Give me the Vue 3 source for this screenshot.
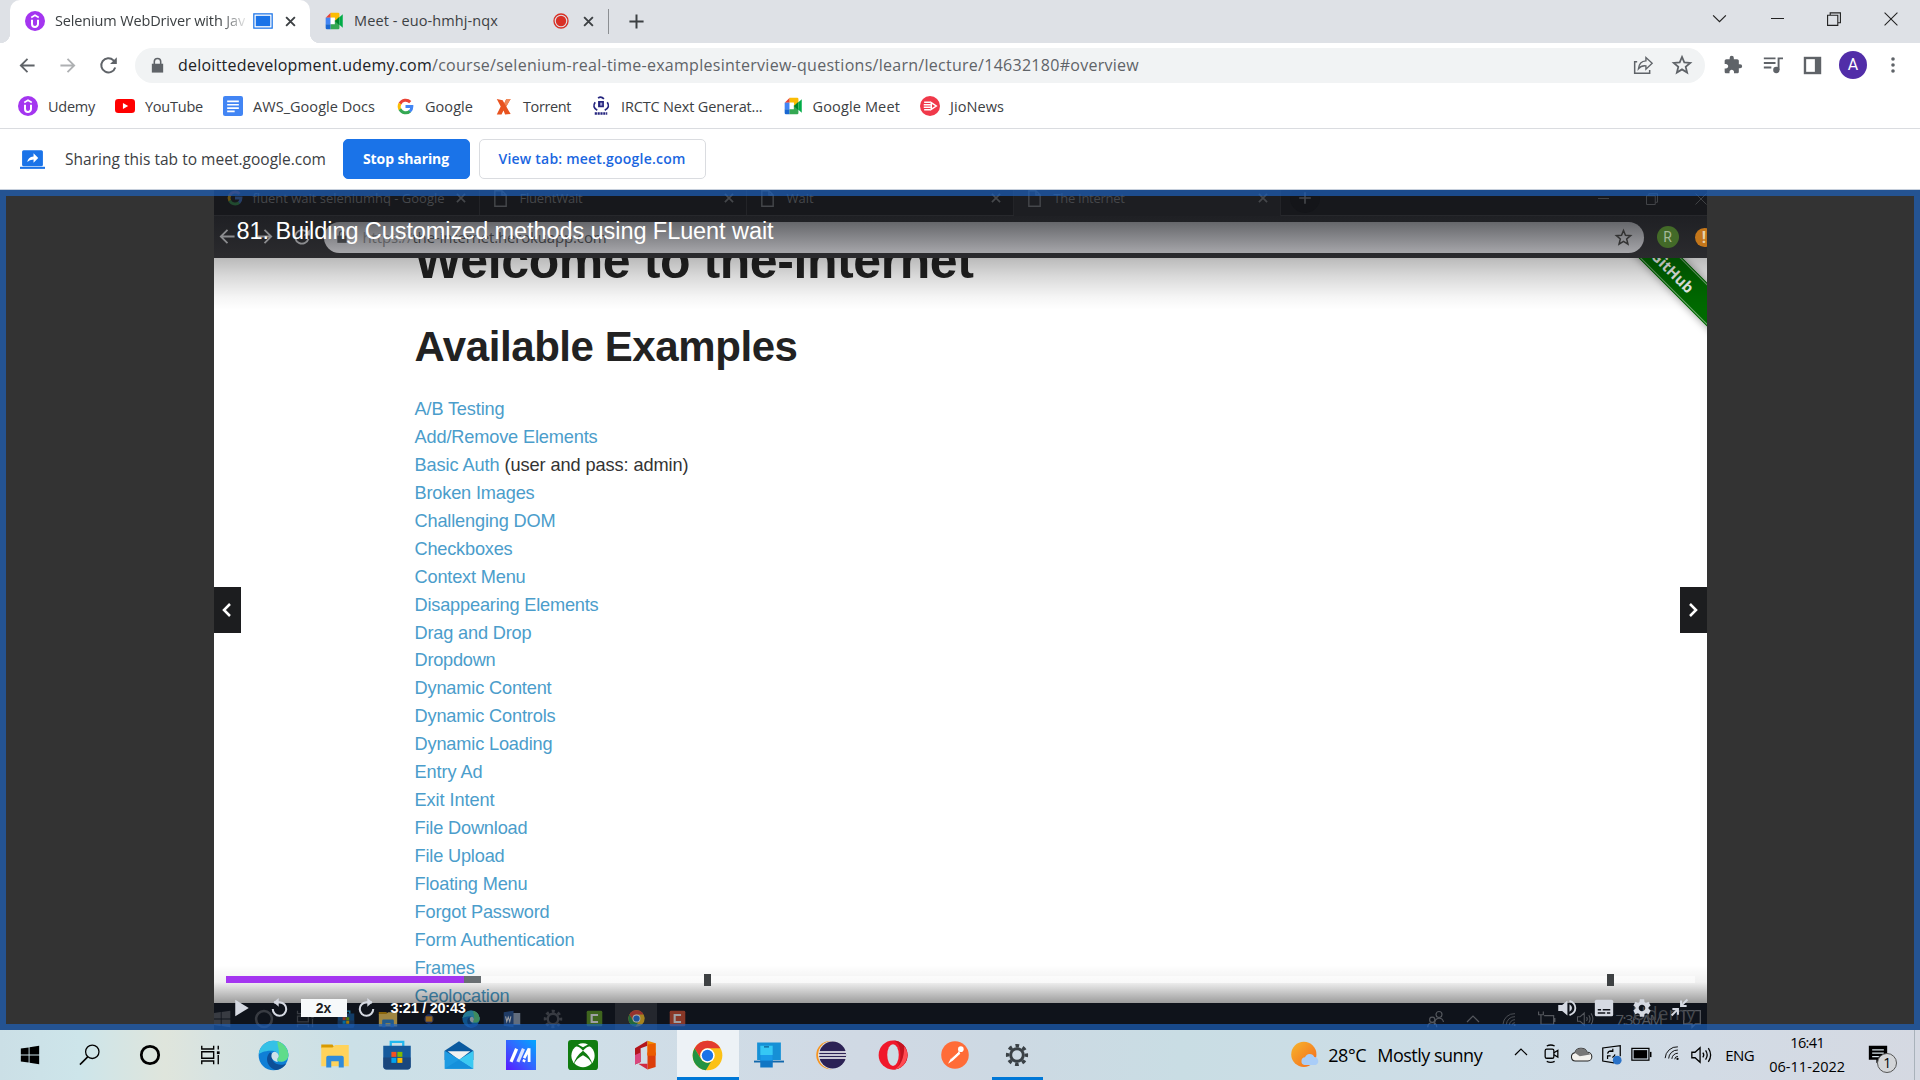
<script setup>
import { h } from 'vue'

// Spreads a label over a fixed advance width by adjusting its tracking.
const vFit = {
  mounted(el, { value }) {
    const w = el.getBoundingClientRect().width
    el.style.letterSpacing = (value - w) / el.textContent.trim().length + 'px'
  },
}

const star = '<path d="M12 3.2l2.500 6 6.500.5-5 4.200 1.600 6.400L12 16.800l-5.600 3.500L8 13.900 3 9.700l6.500-.5z" fill="none" stroke="currentColor" stroke-width="1.900"/>'
const win = '<path fill="currentColor" d="M2 5l8.500-1.300v7.800H2zM11.500 3.500L22 2v9.500H11.500zM2 12.500h8.500v7.800L2 19zM11.500 12.500H22V22l-10.500-1.500z"/>'
const wifi = '<g fill="none" stroke="currentColor" stroke-width="1.300"><path d="M3 20A17 17 0 0 1 21 4"/><path d="M8 20.500A12.500 12.500 0 0 1 21 8.500"/><path d="M12.500 21A8.500 8.500 0 0 1 21 13"/><path d="M16.500 21.500A4.500 4.500 0 0 1 21 17.500"/></g><circle cx="20.500" cy="21" r="1.600" fill="currentColor"/>'
const vol = '<g fill="none" stroke="currentColor" stroke-width="1.400"><path d="M2 9h3.500L11 4v16l-5.500-5H2z"/><path d="M14 9.500q2 2.500 0 5M17 7q3.500 5 0 10M20 4.500q5 7.500 0 15"/></g>'
const taskview = '<g fill="none" stroke="currentColor" stroke-width="1.500"><path d="M3 2v3.500h13V2M3 22v-3.500h13V22M3 8.500h13v7H3zM21 2v4M21 12v10"/></g><path d="M19.500 8h3v3h-3z" fill="currentColor"/>'
const chrome = '<circle cx="12" cy="12" r="11.500" fill="#fbc116"/><path d="M2 6.300A11.500 11.500 0 0 1 22 6.400H12a5.600 5.600 0 0 0-4.900 8.400z" fill="#e33b2e"/><path d="M2 6.300l5 8.500a5.600 5.600 0 0 0 7.700 2.100l-4 6.500A11.500 11.500 0 0 1 2 6.300z" fill="#229342"/><circle cx="12" cy="12" r="5.600" fill="#fff"/><circle cx="12" cy="12" r="4.400" fill="#1a73e8"/>'
const gearPath = 'M19.140 12.940c.04-.3.06-.61.06-.94 0-.32-.02-.64-.07-.94l2.030-1.580c.18-.14.23-.41.12-.61l-1.920-3.320c-.12-.22-.37-.29-.59-.22l-2.390.96c-.5-.38-1.030-.7-1.620-.94l-.36-2.540c-.04-.24-.24-.41-.48-.41h-3.840c-.24 0-.43.17-.47.41l-.36 2.540c-.59.24-1.130.57-1.620.94l-2.390-.96c-.22-.08-.47 0-.59.22L2.740 8.870c-.12.21-.08.47.12.61l2.030 1.580c-.05.3-.09.63-.09.94s.02.64.07.94l-2.030 1.580c-.18.14-.23.41-.12.61l1.920 3.320c.12.22.37.29.59.22l2.390-.96c.5.38 1.030.7 1.620.94l.36 2.540c.05.24.24.41.48.41h3.840c.24 0 .44-.17.47-.41l.36-2.540c.59-.24 1.130-.56 1.620-.94l2.390.96c.22.08.47 0 .59-.22l1.920-3.320c.12-.22.07-.47-.12-.61l-2.010-1.580zM12 15.600c-1.980 0-3.600-1.620-3.600-3.600s1.620-3.600 3.600-3.600 3.600 1.620 3.600 3.600-1.620 3.600-3.600 3.600z'
const cog = '<g fill="none" stroke="currentColor"><circle cx="12" cy="12" r="6.300" stroke-width="2.900"/><circle cx="12" cy="12" r="9.300" stroke-width="3.600" stroke-dasharray="3.650 3.650" stroke-dashoffset="1.800"/></g>'
const folder = '<path d="M1 3.500h9l2 3H1z" fill="#d99a00"/><path d="M1 6h9l2-2h11v17H1z" fill="#ffd35c"/><path d="M5 22v-8q0-1.500 1.500-1.500h11Q19 12.500 19 14v8h-4v-5H9v5z" fill="#2f8bdb"/>'
const edge = '<circle cx="12" cy="12" r="11.500" fill="#0f7fd6"/><path d="M.6 11A11.500 11.500 0 0 1 23.500 11c.3 4-3 6.200-6.500 5.700-2.500-.4-2.600-1.500-1.500-2.800.8-1.500.2-5.300-4.500-5.600C5.500 8 1.500 10 .6 11z" fill="#35c1e6"/><path d="M15 1A11.500 11.500 0 0 1 23.500 11c.3 4-3 6.200-6.500 5.700-2.500-.4-2.600-1.500-1.500-2.800C17.500 9 15 5 15 1z" fill="#5fdc8a"/><path d="M9.500 9.500c-5 4-2 12.500 4.500 13.800 3.500-.4 6.500-2.600 8-5.300-5 3-13 0-10.500-6.500z" fill="#0d4f98"/><path d="M15.300 10.500q-2-2.500-4.300-.5c-2 3.300 1 6.700 4.500 7-.8-1-1-2 0-3.200q1-1.800-.2-3.300z" fill="#d0e2ea"/>'

const icons = {
  udemy: '<circle cx="12" cy="12" r="12" fill="#a435f0"/><path d="M7.500 7.800L12 5.200l4.500 2.600" fill="none" stroke="#fff" stroke-width="2"/><path d="M8.400 10.500v5a3.600 3.600 0 0 0 7.200 0v-5" fill="none" stroke="#fff" stroke-width="2.400"/>',
  meet: '<path d="M2 8l6-6v6z" fill="#ea4335"/><path d="M8 2h9q1.500 0 1.500 1.500V9L13 13V8H8z" fill="#fbbc04"/><path d="M2 8h6v8H2z" fill="#4285f4"/><path d="M2 16h6v6H3.500Q2 22 2 20.500z" fill="#1967d2"/><path d="M8 8h5v8H8z" fill="#fff"/><path d="M8 16h5v-5l5.500 4v5.500Q18.500 22 17 22H8z" fill="#34a853"/><path d="M13 12l5.500-5v10z" fill="#00832d"/><path d="M18.500 7.500L22.500 4v16l-4-3.500z" fill="#00ac47"/>',
  tabshare: '<path d="M1 3.500h22v17H1z" fill="#fff" stroke="#1a73e8" stroke-width="1.500"/><path d="M3.300 5.800h17.400v12.400H3.300z" fill="#1a73e8"/>',
  rec: '<circle cx="12" cy="12" r="10.500" fill="none" stroke="#d93025" stroke-width="2"/><circle cx="12" cy="12" r="7.800" fill="#d93025"/>',
  x: '<path d="M5 5l14 14M19 5L5 19" stroke="currentColor" stroke-width="3" fill="none"/>',
  plus: '<path d="M12 2v20M2 12h20" stroke="currentColor" stroke-width="2.800"/>',
  down: '<path d="M3 7.500l9 9 9-9" fill="none" stroke="currentColor" stroke-width="1.700"/>',
  up: '<path d="M3 16.500l9-9 9 9" fill="none" stroke="currentColor" stroke-width="1.800"/>',
  min: '<path d="M0 12h24" stroke="currentColor" stroke-width="1.900"/>',
  restore: '<path d="M1 5.500h17.500V23H1zM5.500 5V1.500H23v17h-4" fill="none" stroke="currentColor" stroke-width="1.900"/>',
  close: '<path d="M1 1l22 22M23 1L1 23" stroke="currentColor" stroke-width="1.800"/>',
  back: '<path d="M22 12H3M12 2.500L2.500 12l9.500 9.500" fill="none" stroke="currentColor" stroke-width="2.500"/>',
  fwd: '<path d="M2 12h19M12 2.500l9.500 9.500-9.500 9.500" fill="none" stroke="currentColor" stroke-width="2.500"/>',
  reload: '<path d="M20.500 14.500A9 9 0 1 1 18.300 5.500L21 8.200" fill="none" stroke="currentColor" stroke-width="2.500"/><path d="M22.500 1.500V10H14z" fill="currentColor"/>',
  lock: '<path d="M4 9.500h16V22H4z" fill="currentColor"/><path d="M7.500 10V6.500a4.500 4.500 0 0 1 9 0V10" fill="none" stroke="currentColor" stroke-width="2.200"/>',
  share: '<path d="M5 8H2v14h18v-4" fill="none" stroke="currentColor" stroke-width="1.800"/><path d="M6.500 16.500q1-9 9-9.500V3l7.500 7-7.500 7v-4q-6-.5-9 3.500z" fill="none" stroke="currentColor" stroke-width="1.600"/>',
  star,
  puzzle: '<path fill="currentColor" d="M20.500 11H19V7c0-1.100-.9-2-2-2h-4V3.500a2.500 2.500 0 0 0-5 0V5H4c-1.100 0-2 .9-2 2v3.800h1.500c1.500 0 2.700 1.200 2.700 2.700S5 16.200 3.500 16.200H2V20c0 1.100.9 2 2 2h3.800v-1.500c0-1.500 1.200-2.700 2.700-2.700s2.700 1.200 2.700 2.700V22H17c1.100 0 2-.9 2-2v-4h1.500a2.500 2.500 0 0 0 0-5z"/>',
  music: '<path d="M1 4h14M1 9.500h14M1 15h9" stroke="currentColor" stroke-width="2.300"/><circle cx="16" cy="18" r="3.800" fill="currentColor"/><path d="M18.700 18V4H24" fill="none" stroke="currentColor" stroke-width="2.300"/>',
  panel: '<path d="M1 1h22v22H1z" fill="currentColor"/><path d="M4 4h11v16H4z" fill="#fff"/>',
  dots: '<g fill="currentColor"><circle cx="12" cy="4" r="2.400"/><circle cx="12" cy="12" r="2.400"/><circle cx="12" cy="20" r="2.400"/></g>',
  youtube: '<rect y="3.500" width="24" height="17" rx="4" fill="#f00"/><path d="M9.500 8.500v7l6.300-3.500z" fill="#fff"/>',
  docs: '<rect width="24" height="24" rx="2.500" fill="#4285f4"/><path d="M5 6.500h14M5 10.500h14M5 14.500h14M5 18.500h9" stroke="#fff" stroke-width="2"/>',
  google: '<g fill="none" stroke-width="3.800"><path d="M18 6.500A8 8 0 0 0 5 8.500" stroke="#ea4335"/><path d="M5 8.300a8 8 0 0 0 0 7.500" stroke="#fbbc04"/><path d="M5 15.500a8 8 0 0 0 12.700 2.300" stroke="#34a853"/><path d="M12 12h8q0 4-2.600 6.200" stroke="#4285f4"/></g>',
  torrent: '<path d="M3.500 2.500l7.500 1.500 2 4 2.500-5.500h5.500L15.500 12 21 21.500l-7 .5-2-5-2.500 5H3.500l5-10z" fill="#e8531f"/><path d="M15.500 2.500H21L15.500 12 13 8z" fill="#f08a5a"/>',
  irctc: '<g fill="none" stroke="#24247e" stroke-width="2"><path d="M8.500 2.500q3.500-3 7 1M5 7.500q-4 6 2.500 9.500M19.500 7.500q4 6-3 9.500"/></g><path d="M8.500 6h7v7.500h-7z" fill="#24247e"/><path d="M11 8h2.500v3.500H11z" fill="#aaa8d8"/><path d="M4.500 21h15" stroke="#24247e" stroke-width="3.200" stroke-dasharray="2.600 .8"/>',
  jio: '<circle cx="12" cy="12" r="12" fill="#f0394a"/><path d="M5 7.500h8M4.500 10.500H13M4.500 13.500H13M5 16.500h8" stroke="#fff" stroke-width="1.700"/><path d="M13.500 8l6 4-6 4z" fill="none" stroke="#fff" stroke-width="1.800"/>',
  present: '<rect x="2" y="3" width="20" height="15.500" rx="1.500" fill="#1a73e8"/><path d="M0 19h24v2H0z" fill="#1a73e8"/><path d="M7 14.500q.5-5 6-5.500V6l4.500 4.500L13 15v-3q-4 0-6 2.500z" fill="#fff"/>',
  page: '<path d="M4 1h10l6 6v16H4zM14 1v6h6" fill="none" stroke="currentColor" stroke-width="2"/>',
  chevL: '<path d="M16 4l-8 8 8 8" fill="none" stroke="#fff" stroke-width="3.400"/>',
  chevR: '<path d="M8 4l8 8-8 8" fill="none" stroke="#fff" stroke-width="3.400"/>',
  play: '<path d="M3 1l18 11L3 23z" fill="currentColor"/>',
  rew: '<path d="M5 5.500h7.500A8.500 8.500 0 1 1 3.500 14" fill="none" stroke="currentColor" stroke-width="2.600"/><path d="M11 0v11L4.500 5.500z" fill="currentColor"/>',
  ffw: '<path d="M19 5.500h-7.500A8.500 8.500 0 1 0 20.500 14" fill="none" stroke="currentColor" stroke-width="2.600"/><path d="M13 0v11l6.500-5.500z" fill="currentColor"/>',
  sound: '<path fill="currentColor" d="M1.500 8.500v7h4.700L12.500 21V3L6.200 8.500zM15 7.500v9q3-1.800 3-4.500t-3-4.500z"/><path d="M15 3.500q7 2.500 7 8.500t-7 8.500" fill="none" stroke="currentColor" stroke-width="2.200"/>',
  cc: '<rect x="1" y="2" width="22" height="20" rx="2" fill="currentColor"/><path d="M4.500 14h4M10.500 14h9M4.500 18h9M15.500 18h4" stroke="#10131a" stroke-width="1.900"/>',
  gear: `<path fill="currentColor" d="${gearPath}"/>`,
  shrink: '<path d="M22 2l-7 7M14 3v7h7M2 22l7-7M3 14h7v7" fill="none" stroke="currentColor" stroke-width="2.600"/>',
  win, wifi, vol, taskview, chrome, cog, folder, edge,
  search: '<circle cx="14.500" cy="8.500" r="7.300" fill="none" stroke="#000" stroke-width="1.400"/><path d="M9.500 14L1 22.500" stroke="#000" stroke-width="1.700"/>',
  ring: '<circle cx="12" cy="12" r="9.500" fill="none" stroke="currentColor" stroke-width="3"/>',
  store: '<path d="M7 5V1.500h10V5" fill="none" stroke="#21b8ef" stroke-width="1.800"/><path d="M1 4.500h22V21q0 2.500-2.500 2.500h-17Q1 23.500 1 21z" fill="#155a9c"/><path d="M1 14h22v7q0 2.500-2.500 2.500h-17Q1 23.500 1 21z" fill="#1d3f70" opacity=".7"/><path d="M7.500 9.500h4v4h-4z" fill="#f25022"/><path d="M12.300 9.500h4v4h-4z" fill="#7fba00"/><path d="M7.500 14.300h4v4h-4z" fill="#00a4ef"/><path d="M12.300 14.300h4v4h-4z" fill="#ffb900"/>',
  mail: '<path d="M.5 8.500L12 1l11.500 7.500V16H.5z" fill="#0b5a9f"/><path d="M3 9h18l-9 7z" fill="#f2f2f2"/><path d="M.5 8.500L14 16.500 23.500 23H.5z" fill="#1e9be2"/><path d="M23.500 8.500V23L12 15.800z" fill="#3cc9f2"/><path d="M.5 23l11.500-7.200L23.500 23z" fill="#1590db"/>',
  asus: '<defs><linearGradient id="ga" x1="0" y1="1" x2="1" y2="0"><stop offset="0" stop-color="#5a18ff"/><stop offset=".5" stop-color="#3366ff"/><stop offset="1" stop-color="#00a8ff"/></linearGradient></defs><path d="M0 0h24v24H0z" fill="url(#ga)"/><path d="M4 17.500L8.500 7" stroke="#fff" stroke-width="2.600"/><path d="M9.500 17.500L14 7" stroke="#d9e2ff" stroke-width="2.600"/><path d="M14 17.500l.8-1.800M18.500 6.500v11M14.500 14.500L18.500 6.800" fill="none" stroke="#fff" stroke-width="2.200"/>',
  xbox: '<rect width="24" height="24" rx="2.500" fill="#107c10"/><circle cx="12" cy="12.500" r="9.300" fill="#fff"/><path d="M5.500 5Q9 5 12 8.500 15 5 18.500 5L16 2H8z" fill="#107c10"/><path d="M8 3.500Q12 1.500 16 3.500L12 5.800z" fill="#fff"/><path d="M4.500 19.500Q6 13 12 8.500q6 4.500 7.500 11Q17 14.500 12 12.200 7 14.500 4.500 19.500z" fill="#107c10"/>',
  office: '<path d="M4 6.500L14 .5v4L8.500 6.500v11L4 19.500z" fill="#b3151b"/><path d="M14 .5l6.500 2V12H14z" fill="#f08a00"/><path d="M14 10h6.500v11.500L14 23.500z" fill="#dc3e0a"/><path d="M14 3.500l6.500-1v10H14z" fill="#eb5c00"/><path d="M4 12v7.500l4.500-2V10z" fill="#d9477e"/><path d="M6.500 19H14v4.500z" fill="#d12b42"/>',
  phone: '<path d="M2.500 2h19v14h-19z" fill="#1690d6"/><path d="M0 16.500h24v1.500H0z" fill="#1268ac"/><path d="M5 4.500h10v17.500H5z" fill="#1076c4"/><path d="M5 4.500h10V12H5z" fill="#35c8f5"/><path d="M5 12h10v4.500H5z" fill="#1a9be8"/><path d="M8 5.500h4" stroke="#0b5d94"/>',
  eclipse: '<circle cx="11.500" cy="12" r="11.300" fill="#f7941e"/><circle cx="13" cy="12" r="11.300" fill="#dce3ea"/><circle cx="13.300" cy="12" r="10.800" fill="#2c2255"/><path d="M2.500 9.600h21.500M2 12h22M2.500 14.400h21.500" stroke="#fff" stroke-width="1.200"/>',
  opera: '<ellipse cx="12" cy="12" rx="11.500" ry="11.700" fill="#f0182b"/><path d="M12 .3a11.600 11.600 0 0 1 0 23.400q6-1 6-11.700T12 .3z" fill="#c4121f"/><path d="M13 23.600A11.600 11.600 0 0 0 21 5q0 14-8 18.600z" fill="#ff4b52"/><ellipse cx="12" cy="12" rx="4.600" ry="8.700" fill="#cddde5"/>',
  postman: '<circle cx="12" cy="12" r="11.800" fill="#ff6c37"/><circle cx="17" cy="7" r="2.400" fill="#fff"/><path d="M15.500 8.500l-7 6.500-2.500 4.500 4-2.500 6.500-6z" fill="#fff"/><path d="M8.500 15l6-5.500" stroke="#ff6c37" stroke-width=".8"/>',
  weather: '<defs><linearGradient id="gw" x1="0" y1="0" x2="1" y2="1"><stop offset="0" stop-color="#f7b52c"/><stop offset="1" stop-color="#f4691e"/></linearGradient></defs><circle cx="11" cy="11.500" r="10.800" fill="url(#gw)"/><path d="M11.500 20.500a3.300 3.300 0 0 1 .5-6.500 4.300 4.300 0 0 1 8-.3 3.500 3.500 0 0 1 1 6.800z" fill="#a9cdf8"/>',
  meetnow: '<g fill="none" stroke="#000" stroke-width="1.600"><rect x="4" y="6.500" width="11" height="11.500" rx="2"/><path d="M15 11l5-3v8.500l-5-3M6 2.500q5-2.500 10 0M6 22q5 2.500 10 0"/></g>',
  cloud: '<path d="M5 19.500a4.800 4.800 0 0 1-.6-9.500 7.500 7.500 0 0 1 14-.5 5 5 0 0 1 .8 10z" fill="#f4f2ee" stroke="#222" stroke-width="1.200"/><path d="M4.400 10a7.500 7.500 0 0 1 14-.5 5 5 0 0 1 3.500 2.500L10 14z" fill="#777"/>',
  sync: '<g fill="none" stroke="#000" stroke-width="1.400"><path d="M15 21.500L2 19.500v-15L22 2v12"/><path d="M7.500 11q1-4 6-3M13.500 5.500V8.500H10.500M7.500 17v-3.500H11M16 12q-.5 2-3 3.500"/></g><circle cx="18.500" cy="18.500" r="5" fill="#2a72c8"/>',
  battery: '<rect x="1" y="5" width="19.500" height="13.500" fill="none" stroke="#000" stroke-width="1.400"/><path d="M3 7h15.500v9.500H3z" fill="#000"/><path d="M22.500 9v6" stroke="#000" stroke-width="1.800"/>',
  notif: '<path d="M1 2h22v17h-9l-4 4v-4H1z" fill="#000"/><path d="M5 7h14M5 11h14M5 15h8" stroke="#d6e2e8" stroke-width="1.500"/>',
  bubble: '<path d="M2 2h20v16h-6l-4 4v-4H2z" fill="none" stroke="currentColor" stroke-width="1.600"/>',
  people: '<g fill="none" stroke="currentColor" stroke-width="1.600"><circle cx="16" cy="6" r="4"/><path d="M10 20q0-9 6-9 5 0 6 5"/><circle cx="7" cy="13" r="3.500"/><path d="M1 23q0-6 6-6t6 6"/></g>',
  plug: '<g fill="none" stroke="currentColor" stroke-width="1.500"><path d="M9 7h12v11H5v-6M22.500 10v5M2 2v4h6V2M5 6v6"/></g>',
  word: '<path d="M12 4h11v16H12z" fill="#9aa9bf"/><path d="M1 3l13-2v22L1 21z" fill="#2b5797"/><path d="M3.500 8.500l1.500 7 2-6 2 6 1.500-7" fill="none" stroke="#fff" stroke-width="1.400"/>',
  camG: '<rect x="1" y="1" width="22" height="22" rx="2" fill="#5f9c20"/><path d="M17 7H8v10h9" fill="none" stroke="#fff" stroke-width="3"/>',
  camR: '<rect x="1" y="1" width="22" height="22" rx="2" fill="#d9502f"/><path d="M17 7H8v10h9" fill="none" stroke="#fff" stroke-width="3"/>',
  bulb: '<circle cx="12" cy="12" r="7" fill="#2b3f8c"/><path d="M7 8h10v8H7z" fill="#f0a020"/>',
}

const Icon = (p) =>
  h('svg', { viewBox: '0 0 24 24', width: p.s, height: p.s, class: 'icon', innerHTML: icons[p.n] })
Icon.props = ['n', 's']

const bookmarks = [
  ['udemy', 20, 'Udemy', 47],
  ['youtube', 20, 'YouTube', 58],
  ['docs', 20, 'AWS_Google Docs', 122],
  ['google', 19, 'Google', 48],
  ['torrent', 19, 'Torrent', 48],
  ['irctc', 20, 'IRCTC Next Generat...', 141.500],
  ['meet', 20, 'Google Meet', 87.500],
  ['jio', 20, 'JioNews', 54],
]

const examples = [
  ['A/B Testing', 90], ['Add/Remove Elements', 183], ['Basic Auth', 85], ['Broken Images', 120],
  ['Challenging DOM', 141], ['Checkboxes', 98], ['Context Menu', 111], ['Disappearing Elements', 184],
  ['Drag and Drop', 117], ['Dropdown', 81], ['Dynamic Content', 137], ['Dynamic Controls', 141],
  ['Dynamic Loading', 138], ['Entry Ad', 68], ['Exit Intent', 80], ['File Download', 113],
  ['File Upload', 90], ['Floating Menu', 113], ['Forgot Password', 135], ['Form Authentication', 160],
  ['Frames', 60], ['Geolocation', 95],
]

const innerTasks = [
  ['win', 20], ['ring', 20], ['taskview', 20], ['store', 18], ['folder', 20], ['bulb', 16],
  ['edge', 18], ['word', 18], ['cog', 20], ['camG', 17], ['chrome', 17], ['camR', 17],
]

const systemTasks = [['win', 22], ['search', 22], ['ring', 22], ['taskview', 22]]
const tasks = [
  ['edge', 31], ['folder', 30], ['store', 30], ['mail', 30], ['asus', 30], ['xbox', 30], ['office', 30],
  ['chrome', 31], ['phone', 30], ['eclipse', 30], ['opera', 30], ['postman', 28], ['cog', 24],
]
const tray = [['up', 16], ['meetnow', 19], ['cloud', 21], ['sync', 21], ['battery', 21], ['wifi', 17], ['vol', 22]]
</script>

<template>
  <div class="desktop">
    <header class="strip">
      <div class="tab active">
        <Icon n="udemy" :s="20" />
        <div class="title fade"><span v-fit="190" class="t">Selenium WebDriver with Jav</span></div>
        <Icon n="tabshare" :s="20" />
        <Icon n="x" :s="15" class="shut" />
      </div>
      <div class="tab">
        <Icon n="meet" :s="20" />
        <div class="title"><span v-fit="144" class="t">Meet - euo-hmhj-nqx</span></div>
        <Icon n="rec" :s="16" class="record" />
        <Icon n="x" :s="15" class="shut" />
      </div>
      <i class="split"></i>
      <Icon n="plus" :s="17" class="newtab" />
      <div class="winctl">
        <Icon n="down" :s="17" /><Icon n="min" :s="13" /><Icon n="restore" :s="14" /><Icon n="close" :s="14" />
      </div>
    </header>

    <div class="toolbar">
      <div class="nav">
        <Icon n="back" :s="17" /><Icon n="fwd" :s="17" class="off" /><Icon n="reload" :s="19" />
      </div>
      <div class="omni">
        <Icon n="lock" :s="17" />
        <span v-fit="254" class="t host">deloittedevelopment.udemy.com</span>
        <span v-fit="707" class="t path">/course/selenium-real-time-examplesinterview-questions/learn/lecture/14632180#overview</span>
        <Icon n="share" :s="20" class="send" />
        <Icon n="star" :s="22" />
      </div>
      <div class="actions">
        <Icon n="puzzle" :s="20" /><Icon n="music" :s="20" /><Icon n="panel" :s="19" />
        <b class="avatar">A</b>
        <Icon n="dots" :s="18" class="more" />
      </div>
    </div>

    <nav class="bookmarks">
      <div v-for="b in bookmarks" :key="b[2]" class="bm">
        <span class="fav"><Icon :n="b[0]" :s="b[1]" /></span>
        <span v-fit="b[3]" class="t">{{ b[2] }}</span>
      </div>
    </nav>

    <div class="infobar">
      <Icon n="present" :s="25" />
      <span v-fit="261" class="t msg">Sharing this tab to meet.google.com</span>
      <button class="btn primary"><span v-fit="86" class="t">Stop sharing</span></button>
      <button class="btn"><span v-fit="187" class="t">View tab: meet.google.com</span></button>
    </div>

    <main class="stage">
      <section class="video">
        <div class="rtabs">
          <div class="rtab first"><Icon n="google" :s="18" /><span v-fit="192" class="t">fluent wait seleniumhq - Google</span><Icon n="x" :s="14" class="rx" /></div>
          <div class="rtab"><Icon n="page" :s="17" /><span v-fit="63" class="t">FluentWait</span><Icon n="x" :s="14" class="rx" /></div>
          <div class="rtab"><Icon n="page" :s="17" /><span v-fit="27" class="t">Wait</span><Icon n="x" :s="14" class="rx" /></div>
          <div class="rtab cur"><Icon n="page" :s="17" /><span v-fit="71" class="t">The Internet</span><Icon n="x" :s="14" class="rx" /></div>
          <span class="radd"><Icon n="plus" :s="14" /></span>
          <div class="rctl"><Icon n="min" :s="11" /><Icon n="restore" :s="12" /><Icon n="close" :s="12" /></div>
        </div>
        <div class="rbar">
          <div class="rnav"><Icon n="back" :s="17" /><Icon n="fwd" :s="17" /><Icon n="reload" :s="18" /></div>
          <div class="romni">
            <Icon n="lock" :s="14" />
            <span class="t rurl" v-fit="244"><i>https://</i>the-internet.herokuapp.com</span>
            <Icon n="star" :s="19" class="rstar" />
          </div>
          <b class="rav">R</b><b class="rwarn">!</b>
        </div>
        <div class="page">
          <h1><span v-fit="559" class="t">Welcome to the-internet</span></h1>
          <h2><span v-fit="383" class="t">Available Examples</span></h2>
          <ul>
            <li v-for="e in examples" :key="e[0]">
              <a v-fit="e[1]" class="t">{{ e[0] }}</a>
              <span v-if="e[0] === 'Basic Auth'" v-fit="184" class="t note">(user and pass: admin)</span>
            </li>
          </ul>
          <div class="ribbon"><span>GitHub</span></div>
          <div class="shade top"></div>
          <div class="shade bottom"></div>
        </div>
        <div class="rtask">
          <span v-for="(t, i) in innerTasks" :key="i" class="rt" :class="{ lit: t[0] === 'chrome' }"><Icon :n="t[0]" :s="t[1]" /></span>
          <div class="rtray">
            <Icon n="people" :s="18" /><Icon n="up" :s="16" /><Icon n="wifi" :s="16" /><Icon n="plug" :s="19" /><Icon n="vol" :s="18" />
            <span v-fit="46" class="t">7:36 AM</span><Icon n="bubble" :s="20" />
          </div>
          <span class="mark">Udemy</span>
        </div>

        <div class="heading"><span v-fit="537" class="t">81. Building Customized methods using FLuent wait</span></div>
        <div class="side prev"><Icon n="chevL" :s="18" /></div>
        <div class="side next"><Icon n="chevR" :s="18" /></div>

        <div class="player">
          <div class="track">
            <i class="played"></i><i class="buffered"></i>
            <i class="cue" style="left: 478px"></i><i class="cue" style="left: 1381px"></i>
          </div>
          <div class="controls">
            <Icon n="play" :s="18" /><Icon n="rew" :s="19" />
            <span class="rate">2x</span><Icon n="ffw" :s="19" />
            <span v-fit="75" class="t time">3:21 / 20:43</span>
            <div class="opts">
              <Icon n="sound" :s="20" /><Icon n="cc" :s="20" /><Icon n="gear" :s="22" /><Icon n="shrink" :s="19" />
            </div>
          </div>
        </div>
      </section>
      <div class="frame"></div>
    </main>

    <footer class="taskbar">
      <span v-for="(t, i) in systemTasks" :key="i" class="sys"><Icon :n="t[0]" :s="t[1]" /></span>
      <div class="pins">
        <span v-for="t in tasks" :key="t[0]" class="pin" :class="{ open: t[0] === 'chrome', run: t[0] === 'cog' }"><Icon :n="t[0]" :s="t[1]" /></span>
      </div>
      <div class="weather">
        <Icon n="weather" :s="28" />
        <span v-fit="38" class="t">28°C</span><span v-fit="105" class="t sunny">Mostly sunny</span>
      </div>
      <div class="tray">
        <span v-for="t in tray" :key="t[0]" class="tr"><Icon :n="t[0]" :s="t[1]" /></span>
      </div>
      <span v-fit="29" class="t lang">ENG</span>
      <div class="clock"><span v-fit="34" class="t">16:41</span><span v-fit="76" class="t">06-11-2022</span></div>
      <div class="notice"><Icon n="notif" :s="20" /><b>1</b></div>
      <i class="peek"></i>
    </footer>
  </div>
</template>

<style>
body { margin: 0; overflow: hidden; }
</style>

<style scoped>
.desktop { width: 1920px; height: 1080px; display: flex; flex-direction: column; overflow: hidden; background: #fff; color: #3c4043; font: 15px "Open Sans", "Noto Sans", sans-serif; }
.t { flex: none; display: inline-block; width: max-content; white-space: nowrap; }
.icon { flex: none; display: block; overflow: visible; }
i { font-style: normal; }

.strip { height: 43px; flex: none; display: flex; align-items: center; background: #dee1e6; padding-left: 10px; box-sizing: border-box; }
.tab { display: flex; align-items: center; box-sizing: border-box; height: 43px; width: 298px; padding: 0 12px 1px 14px; font-size: 14.5px; }
.tab.active { position: relative; width: 300px; padding-left: 15px; background: #fff; border-radius: 10px 10px 0 0; }
.tab.active::before, .tab.active::after { content: ""; position: absolute; bottom: 0; width: 10px; height: 10px; }
.tab.active::before { left: -10px; background: radial-gradient(circle at 0 0, transparent 10px, #fff 10.500px); }
.tab.active::after { right: -10px; background: radial-gradient(circle at 100% 0, transparent 10px, #fff 10.500px); }
.title { margin: 0 0 2px 10px; flex: none; width: 198px; overflow: hidden; }
.active .title { width: 190px; margin-right: 8px; }
.fade { -webkit-mask-image: linear-gradient(90deg, #000 165px, transparent 194px); mask-image: linear-gradient(90deg, #000 165px, transparent 194px); }
.shut { margin-left: auto; color: #3c4043; }
.record { margin-left: 1px; }
.split { width: 1px; height: 25px; background: #8b8e92; }
.newtab { margin: 0 0 1px 19px; color: #3c4043; }
.winctl { display: flex; align-items: center; margin: 0 22px 6px auto; color: #222; gap: 43px; }

.toolbar { height: 45px; flex: none; display: flex; align-items: center; color: #5f6368; padding-bottom: 1px; box-sizing: border-box; }
.nav { width: 135px; flex: none; display: flex; gap: 23px; padding-left: 19px; box-sizing: border-box; align-items: center; }
.off { opacity: .5; }
.omni { width: 1570px; height: 35px; border-radius: 18px; flex: none; box-sizing: border-box; background: #f1f3f4; display: flex; align-items: center; padding: 0 12px 0 14px; font-size: 16px; }
.host { margin-left: 12px; color: #202124; }
.path { color: #5f6368; }
.send { margin: 0 18px 0 auto; }
.actions { flex: 1; display: flex; align-items: center; padding-left: 18px; gap: 20px; }
.avatar { width: 28px; height: 28px; margin: 0 6px 0 -3px; border-radius: 50%; background: #512da8; color: #fff; font: 16px/28px Roboto, sans-serif; text-align: center; flex: none; }
.more { margin-left: -9px; }

.bookmarks { height: 40px; box-sizing: border-box; flex: none; display: flex; align-items: center; gap: 20px; padding: 0 0 5px 18px; border-bottom: 1px solid #dadce0; font-size: 14.5px; margin-top: 1px; }
.bm { display: flex; align-items: center; gap: 10px; }
.fav { width: 20px; display: flex; justify-content: center; }

.infobar { height: 61px; flex: none; box-sizing: border-box; display: flex; align-items: center; padding: 0 0 0 20px; border-bottom: 1px solid #c6cfdc; }
.msg { margin: 0 17px 0 20px; font-size: 15.5px; }
.btn { box-sizing: border-box; height: 40px; border: 1px solid #dadce0; border-radius: 5px; padding: 0 20px 2px 19px; background: #fff; color: #1a66e0; font: 600 14px "Open Sans", sans-serif; margin-right: 9px; width: 227px; display: flex; align-items: center; justify-content: center; }
.btn.primary { width: 127px; background: #1a73e8; border-color: #1a73e8; color: #fff; font-weight: 700; }

.stage { position: relative; height: 840px; flex: none; display: flex; justify-content: center; background: #333; }
.frame { position: absolute; inset: 0; border: 6px solid rgba(29, 99, 192, .68); }
.video { position: relative; width: 1493px; height: 840px; overflow: hidden; display: flex; flex-direction: column; background: #fff; }
.rtabs { height: 26px; flex: none; display: flex; background: #17181c; color: #45474b; font: 13px "Open Sans", sans-serif; border-bottom: 1px solid #27282c; box-sizing: border-box; }
.rtab { box-sizing: border-box; width: 267px; height: 25px; display: flex; align-items: center; padding: 0 10px 9px 12px; gap: 11px; border-right: 1px solid #232428; }
.rtab.first { width: 266px; gap: 9px; padding-right: 12px; }
.rtab.first .icon:first-child { opacity: .35; }
.rtab.cur { background: #1d1e22; height: 26px; padding-bottom: 10px; }
.rx { margin-left: auto; }
.radd { width: 30px; height: 30px; flex: none; border-radius: 50%; margin: -7px 0 0 9px; display: flex; align-items: center; justify-content: center; background: #141519; }
.rctl { margin: 3px 0 0 auto; display: flex; gap: 37px; }
.rbar { position: relative; height: 42px; flex: none; display: flex; align-items: center; background: linear-gradient(#1f2024, #2b2b2e); }
.rnav { width: 110px; display: flex; gap: 20px; padding-left: 5px; box-sizing: border-box; color: #8b8c8f; flex: none; }
.romni { width: 1320px; height: 31px; border-radius: 16px; flex: none; display: flex; align-items: center; box-sizing: border-box; padding: 0 11px 0 11px; background: linear-gradient(#66676b, #a6a6aa); color: #3f4043; font: 15px "Open Sans", sans-serif; }
.rurl { margin-left: 14px; color: #3a3b3e; }
.rurl i { color: #5d5e61; }
.rstar { margin-left: auto; color: #333; }
.rav, .rwarn { flex: none; border-radius: 50%; text-align: center; font-family: Roboto, sans-serif; font-weight: 400; }
.rav { width: 22px; height: 22px; margin-left: 13px; line-height: 22px; font-size: 14px; background: #436a28; color: #a5b898; }
.rwarn { width: 19px; height: 19px; margin-left: 16px; line-height: 19px; font-size: 16px; background: #c4761a; color: #e8d4ae; font-weight: 700; }

.page { position: relative; height: 745px; flex: none; overflow: hidden; padding-left: 201px; box-sizing: border-box; font-family: "Liberation Sans", Arial, sans-serif; color: #222; }
.page h1, .page h2, .page ul { margin: 0; padding: 0; }
.page h1 { height: 40px; line-height: 40px; font-size: 50px; margin-top: -17px; }
.page h2 { font-size: 42px; line-height: 50px; margin-top: 41px; }
.page ul { list-style: none; margin-top: 23px; font-size: 18.200px; }
.page li { height: 27.950px; line-height: 28px; display: flex; gap: 5px; }
.page a { color: #4b9dcb; }
.note { color: #333; }
.shade { position: absolute; left: 0; right: 0; pointer-events: none; }
.top { top: 0; height: 52px; background: linear-gradient(rgba(0,0,0,.27), rgba(0,0,0,.15) 35%, rgba(0,0,0,.04) 75%, transparent); }
.bottom { bottom: 0; height: 38px; background: linear-gradient(transparent, rgba(0,0,0,.06) 45%, rgba(0,0,0,.39)); }
.ribbon { position: absolute; width: 220px; height: 31px; top: 3px; right: -82px; transform: rotate(45deg); display: flex; align-items: center; justify-content: center; background: #006a00; box-shadow: 0 0 0 1px #006a00 inset, 0 0 0 2px #6fa56f inset, 0 0 8px rgba(0,0,0,.4); color: #eef4ee; font: 700 15px "Open Sans", sans-serif; }
.ribbon span { margin-right: 16px; }

.rtask { height: 27px; flex: none; position: relative; display: flex; background: #0f131b; color: #54575d; }
.rt { width: 41.400px; flex: none; height: 27px; display: flex; align-items: center; justify-content: center; padding-top: 4px; box-sizing: border-box; }
.rt .icon { opacity: .6; }
.rt:first-child { margin-left: -12px; }
.rt.lit { background: #24272e; }
.rtray { display: flex; align-items: center; margin: 5px 5px 0 auto; gap: 20px; font: 15px "Open Sans", sans-serif; }
.rtray .t { margin-left: 2px; }
.mark { position: absolute; right: 11px; top: -3px; font: 19px "Open Sans", sans-serif; color: #44474d; }

.heading { position: absolute; left: 23px; top: 25px; line-height: 32px; color: #fff; font-family: "Liberation Sans", Arial, sans-serif; font-size: 23.500px; }
.side { position: absolute; top: 397px; width: 27px; height: 46px; background: #1c1d1f; display: flex; align-items: center; justify-content: center; }
.prev { left: 0; }
.next { right: 0; }

.player { position: absolute; left: 12px; right: 12px; top: 786px; color: #d5d9e2; }
.track { position: relative; height: 7px; display: flex; background: rgba(255,255,255,.6); }
.played { width: 238px; background: #a435f0; }
.buffered { width: 17px; background: #6a6f73; }
.cue { position: absolute; top: -2px; width: 7px; height: 12px; background: #3e4143; }
.controls { height: 18px; margin-top: 15.500px; display: flex; align-items: center; padding-left: 7px; }
.controls > .icon:nth-child(2) { margin-left: 19px; margin-right: 12px; }
.rate { width: 46px; height: 18px; background: #f7f9fa; color: #1c1d1f; font: 700 14px/18px "Liberation Sans", sans-serif; text-align: center; margin-right: 10px; flex: none; }
.time { margin-left: 15px; color: #fff; font: 700 14.500px "Liberation Sans", sans-serif; }
.opts { margin-left: auto; margin-right: 6px; display: flex; gap: 17px; align-items: center; }

.taskbar { height: 50px; flex: none; display: flex; align-items: center; color: #000; background: linear-gradient(90deg, #cbdfe6 0, #cde5ea 80px, #dfe5dc 165px, #d7e3e2 215px, #cbe0e7 350px, #cfdfe8 560px, #d0d9e4 860px, #cdd9e3 1000px, #c9dde4 1180px, #cedde7 1500px, #d2dbe5 1700px, #d5d9e2 1920px); }
.sys { width: 60px; display: flex; justify-content: center; }
.pins { display: flex; margin-left: 3px; }
.pin { width: 61.950px; height: 50px; display: flex; align-items: center; justify-content: center; position: relative; padding-right: 1px; box-sizing: border-box; }
.pin.open { background: #edf2f6; }
.pin.open::after, .pin.run::after { content: ""; position: absolute; bottom: 0; left: 0; right: 0; height: 3px; background: #0078d7; }
.pin.run { color: #3a4146; }
.pin.run::after { left: 6px; right: 5px; }
.weather { display: flex; align-items: center; margin-left: 243px; font-size: 18px; }
.weather .t { margin-left: 9px; }
.weather .sunny { margin-left: 11px; }
.tray { display: flex; margin-left: 24px; }
.tr { width: 30px; display: flex; justify-content: center; }
.lang { margin-left: 9px; font-size: 15px; }
.clock { width: 76px; margin-left: 15px; display: flex; flex-direction: column; align-items: center; font-size: 14.500px; line-height: 24px; }
.notice { margin-left: 23px; position: relative; padding-bottom: 2px; }
.notice b { position: absolute; left: 9px; top: 9px; width: 18px; height: 18px; border: 1px solid #555; border-radius: 50%; background: #d3d5d8; text-align: center; font: 14px/18px "Open Sans", sans-serif; }
.peek { margin-left: auto; margin-right: 5px; width: 1px; height: 50px; background: #a9b2ba; }
</style>
